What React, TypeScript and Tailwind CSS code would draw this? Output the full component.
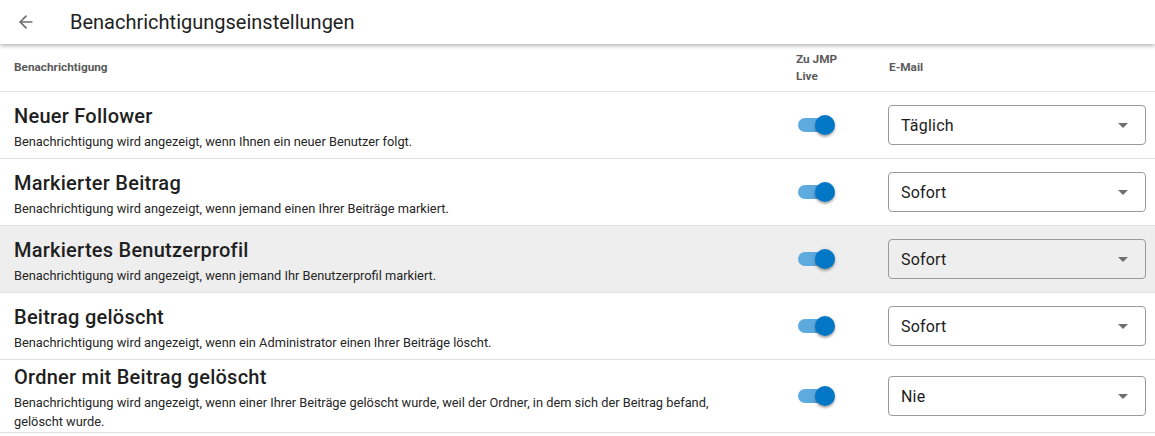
import { ArrowLeft } from "lucide-react";

type Row = {
  title: string;
  desc: string;
  email: string;
  hover?: boolean;
};

const ROWS: Row[] = [
  { title: "Neuer Follower", desc: "Benachrichtigung wird angezeigt, wenn Ihnen ein neuer Benutzer folgt.", email: "Täglich" },
  { title: "Markierter Beitrag", desc: "Benachrichtigung wird angezeigt, wenn jemand einen Ihrer Beiträge markiert.", email: "Sofort" },
  { title: "Markiertes Benutzerprofil", desc: "Benachrichtigung wird angezeigt, wenn jemand Ihr Benutzerprofil markiert.", email: "Sofort", hover: true },
  { title: "Beitrag gelöscht", desc: "Benachrichtigung wird angezeigt, wenn ein Administrator einen Ihrer Beiträge löscht.", email: "Sofort" },
  {
    title: "Ordner mit Beitrag gelöscht",
    desc: "Benachrichtigung wird angezeigt, wenn einer Ihrer Beiträge gelöscht wurde, weil der Ordner, in dem sich der Beitrag befand, gelöscht wurde.",
    email: "Nie",
  },
];

function Toggle() {
  return (
    <div className="relative w-[38px] h-5 flex items-center">
      <div className="w-[35px] h-[14px] rounded-full bg-[#5daade] ml-[1px]" />
      <div className="absolute right-0 top-0 w-5 h-5 rounded-full bg-[#0277c6] shadow-[0_2px_2px_rgba(0,0,0,0.25),0_1px_4px_rgba(0,0,0,0.15)]" />
    </div>
  );
}

function Select({ value }: { value: string }) {
  return (
    <div className="h-[40px] w-full border border-[#9a9a9a] rounded-[4px] flex items-center justify-between pl-3 pr-[17px]">
      <span className="text-base text-[#1c1c1c] pt-[2px] tracking-[0.2px]">{value}</span>
      <svg width="10" height="5" viewBox="0 0 10 5">
        <path d="M0 0 L10 0 L5 5 Z" fill="#6f6f6f" />
      </svg>
    </div>
  );
}

export default function App() {
  return (
    <div className="w-[1155px] h-[436px] bg-white overflow-hidden font-['Roboto',sans-serif] text-[#1f1f1f]">
      {/* Header */}
      <div className="relative z-10 h-[44px] flex items-center bg-white shadow-[0_2px_4px_rgba(0,0,0,0.28)]">
        <div className="w-[70px] flex items-center pl-[16px]">
          <ArrowLeft size={20} strokeWidth={2} className="text-[#6b6b6b]" />
        </div>
        <h1 className="text-[20px] leading-none text-[#222]">Benachrichtigungseinstellungen</h1>
      </div>

      {/* Column headers */}
      <div className="grid grid-cols-[796px_92px_267px] h-[48px] border-b border-[#e0e0e0] items-center text-[11.8px] font-bold text-[#5a5a5a]">
        <div className="pl-[14px]">Benachrichtigung</div>
        <div className="w-[50px] leading-[17px] pt-[1px]">Zu JMP Live</div>
        <div className="pl-[1px] pt-[1px]">E-Mail</div>
      </div>

      {/* Rows */}
      {ROWS.map((r) => (
        <div
          key={r.title}
          className={
            "grid grid-cols-[796px_92px_267px] min-h-[67px] py-[1px] items-center border-b border-[#e0e0e0] " +
            (r.hover ? "bg-[#eeeeee]" : "bg-white")
          }
        >
          <div className="pl-[14px] pr-6 flex flex-col">
            <div className="text-[20px] leading-8 font-medium tracking-[0.25px] text-[#1f1f1f]">{r.title}</div>
            <div className="text-[12.8px] leading-[19px] text-[#262626] max-w-[730px]">{r.desc}</div>
          </div>
          <div className="pl-[1px]">
            <Toggle />
          </div>
          <div className="pr-[9px]">
            <Select value={r.email} />
          </div>
        </div>
      ))}
    </div>
  );
}
